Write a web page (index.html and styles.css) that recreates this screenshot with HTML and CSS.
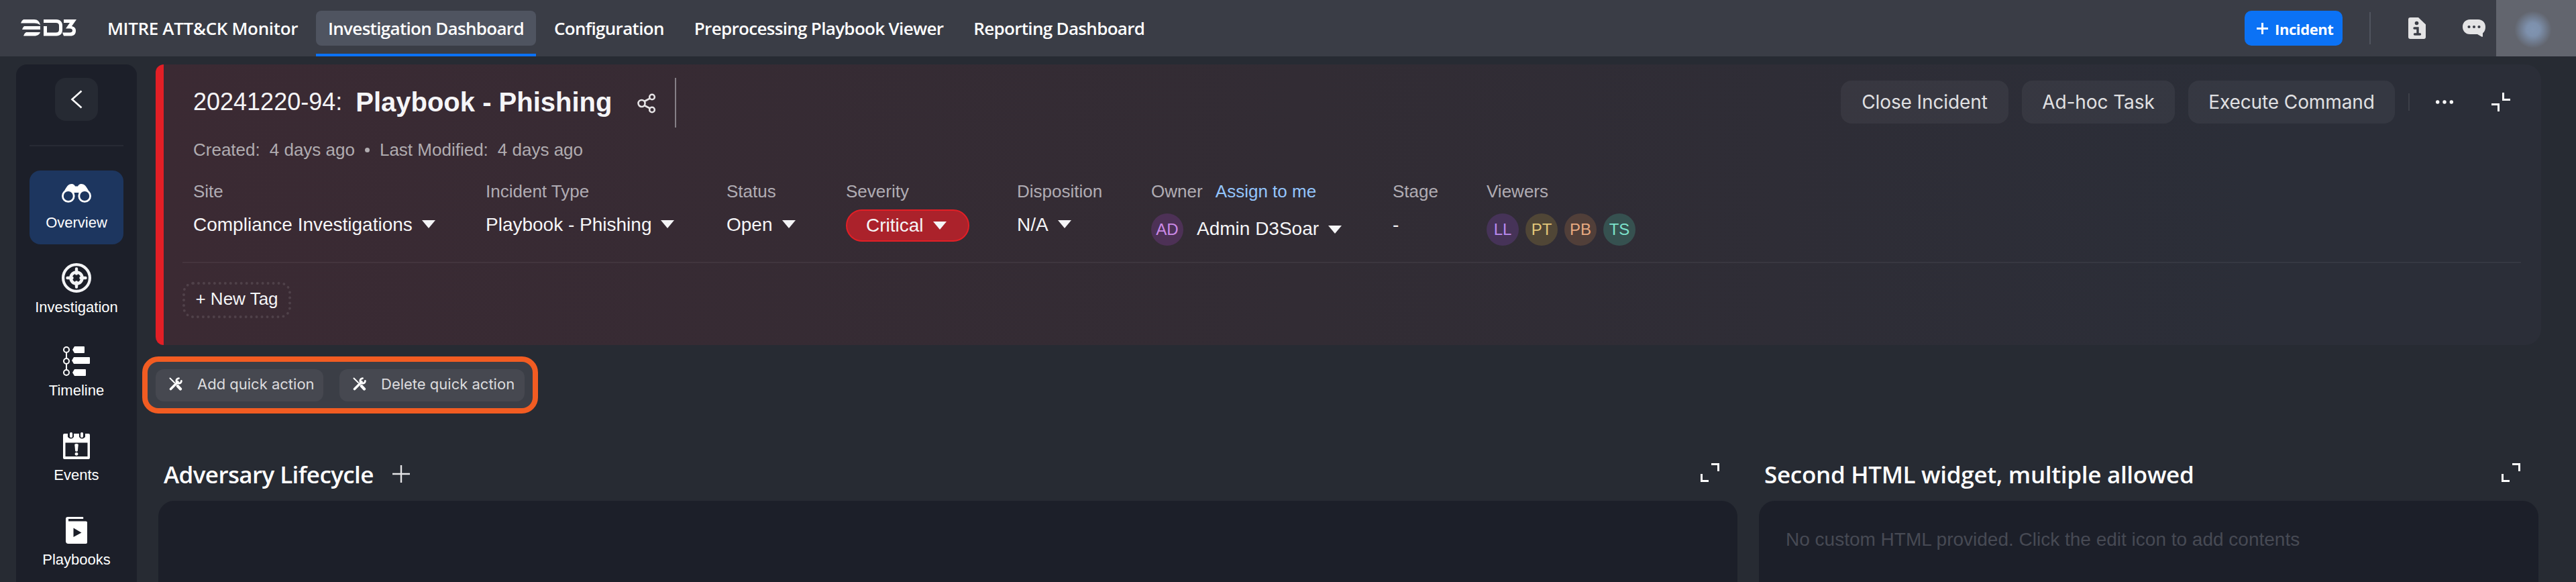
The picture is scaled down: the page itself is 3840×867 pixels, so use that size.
FILE: index.html
```html
<!DOCTYPE html>
<html lang="en">
<head>
    <meta charset="UTF-8">
    <meta name="viewport" content="width=device-width, initial-scale=1.0">
    <title>Investigation Dashboard</title>
    <link rel="stylesheet" href="styles.css">
</head>
<body>

    <!-- Top bar -->
    <header class="topbar">
        <svg class="logo" width="84" height="26" viewBox="0 0 84 26" fill="#fff">
            <path d="M4 0H20C25 0 28 3 29 8.500C27 6.500 24 5.500 20 5.500H0Q1 1.500 4 0Z"/>
            <path d="M5 10H29V15H2Q3 11.500 5 10Z"/>
            <path d="M8 19H29C28 22 25 24.500 20 24.500H4Q5 20.500 8 19Z"/>
            <path d="M34 0H53C59 0 62 4 62 9V15C62 21 59 24.500 53 24.500H34V10H39V19.500H52C55.500 19.500 57 18 57 15V9C57 6.500 55.500 5 52 5H34Z"/>
            <path d="M64 0H83L76 10C80 11 82 13 82 17C82 22 79 24.500 74 24.500H64L62 19.500H73C75.500 19.500 77 18.500 77 16.500C77 14.500 75.500 13.500 73 13.500H67L73 5H64Z"/>
        </svg>
        <nav class="nav">
            <a class="nav-tab nav-tab-wide">MITRE ATT&amp;CK Monitor</a>
            <a class="nav-tab active">Investigation Dashboard</a>
            <a class="nav-tab">Configuration</a>
            <a class="nav-tab">Preprocessing Playbook Viewer</a>
            <a class="nav-tab">Reporting Dashboard</a>
        </nav>
        <div class="topbar-right">
            <button class="btn-incident">
                <svg width="17" height="17" viewBox="0 0 17 17"><path d="M8.500 0V17M0 8.500H17" stroke="#fff" stroke-width="3"/></svg>
                <span>Incident</span>
            </button>
            <div class="topbar-line"></div>
            <svg class="icon-doc" width="26" height="32" viewBox="0 0 26 32">
                <path d="M3 0H15L26 10.500V29Q26 32 23 32H3Q0 32 0 29V3Q0 0 3 0Z" fill="#e4e4e5"/>
                <circle cx="12.500" cy="8.500" r="2.800" fill="#3a3d46"/>
                <path d="M9 16H14V24.500M9.500 25H17.500" fill="none" stroke="#3a3d46" stroke-width="3.400" stroke-linecap="round"/>
            </svg>
            <svg class="icon-chat" width="34" height="26" viewBox="0 0 34 26">
                <path d="M11 0H23C30 0 34 5 34 11C34 15 33 18 30 20.500V25Q29.500 26.500 28 25.500L22 22H11C4 22 0 17 0 11C0 5 4 0 11 0Z" fill="#e4e4e5"/>
                <circle cx="9.500" cy="11" r="2.100" fill="#3a3d46"/><circle cx="17" cy="11" r="2.100" fill="#3a3d46"/><circle cx="24.500" cy="11" r="2.100" fill="#3a3d46"/>
            </svg>
            <div class="account"><div class="account-photo"></div></div>
        </div>
    </header>

    <div class="page">

        <!-- Sidebar -->
        <aside class="sidebar">
            <button class="btn-back">
                <svg width="18" height="28" viewBox="0 0 18 28"><path d="M16.500 1.500L2.500 14L16.500 26.500" fill="none" stroke="#fff" stroke-width="2.600"/></svg>
            </button>
            <div class="sidebar-line"></div>
            <a class="side-item active">
                <svg class="side-icon" viewBox="0 0 44 44">
                    <path d="M1.500 23C4 18 6 14 8.500 11Q11 8 15 8Q18.500 8 20 11.500H24Q25.500 8 29 8Q33 8 35.500 11C38 14 40 18 42.500 23L36 20L27 22L25 21H19L17 22L8 20Z" fill="#fff"/>
                    <circle cx="9.800" cy="26" r="8.400" fill="#1d365f" stroke="#fff" stroke-width="2.800"/>
                    <circle cx="34.200" cy="26" r="8.400" fill="#1d365f" stroke="#fff" stroke-width="2.800"/>
                </svg>
                <span>Overview</span>
            </a>
            <a class="side-item">
                <svg class="side-icon" viewBox="0 0 44 44" fill="none" stroke="#f3f4f6">
                    <circle cx="22" cy="22" r="19.900" stroke-width="4.200"/>
                    <circle cx="22" cy="22" r="8.500" stroke-width="4.600"/>
                    <path d="M22 8.500V15.500M22 28.500V35.500M8.500 22H15.500M28.500 22H35.500" stroke-width="4.400" stroke-linecap="round"/>
                </svg>
                <span>Investigation</span>
            </a>
            <a class="side-item side-item-up">
                <svg class="side-icon" viewBox="0 0 44 44" fill="#fff">
                    <path d="M7 9V18M7 26V35" stroke="#fff" stroke-width="2"/>
                    <g fill="none" stroke="#fff" stroke-width="2">
                        <circle cx="7" cy="5" r="4"/><circle cx="7" cy="22" r="4"/><circle cx="7" cy="39" r="4"/>
                    </g>
                    <path d="M19 0H33Q34 0 34 1V9Q34 10 33 10H19L16 5Z"/>
                    <path d="M18 16H41Q42 16 42 17V25Q42 26 41 26H18L15 21Z"/>
                    <path d="M19 34H35Q36 34 36 35V43Q36 44 35 44H19L16 39Z"/>
                </svg>
                <span>Timeline</span>
            </a>
            <a class="side-item">
                <svg class="side-icon" viewBox="0 0 44 44">
                    <path d="M2 6Q2 4 4 4H9V9Q14 14 18 9V4H26V9Q30 14 35 9V4H40Q42 4 42 6V40Q42 42 40 42H4Q2 42 2 40Z" fill="#fff"/>
                    <rect x="12" y="2" width="4" height="8" rx="2" fill="#fff"/>
                    <rect x="28" y="2" width="4" height="8" rx="2" fill="#fff"/>
                    <rect x="5.500" y="17.500" width="33" height="20.500" fill="#1c1f29"/>
                    <path d="M19.200 20Q22 18 24.800 20L23.800 30Q22 31.500 20.200 30Z" fill="#fff"/>
                    <circle cx="22" cy="34.300" r="2.400" fill="#fff"/>
                </svg>
                <span>Events</span>
            </a>
            <a class="side-item">
                <svg class="side-icon" viewBox="0 0 44 44">
                    <path d="M9 2H31Q33 2 32 5H10V8.500H36Q38 8.500 38 10V40Q38 42 36 42H10Q6 42 6 38V5Q6 2 9 2Z" fill="#fff"/>
                    <path d="M17.500 18.500L29.500 25.500L17.500 32Z" fill="#1c1f29"/>
                </svg>
                <span>Playbooks</span>
            </a>
        </aside>

        <main class="main">

            <!-- Incident summary -->
            <section class="incident">
                <div class="title-row">
                    <span class="incident-id">20241220-94:</span>
                    <h1 class="incident-name">Playbook - Phishing</h1>
                    <svg class="icon-share" width="28" height="30" viewBox="0 0 28 30" fill="none" stroke="#e6e4e6" stroke-width="2.600">
                        <circle cx="6.500" cy="15" r="5"/><circle cx="22" cy="5.500" r="3.800"/><circle cx="22" cy="24.500" r="3.800"/>
                        <path d="M10.500 12L19 7.500M10.500 18L19 22.500"/>
                    </svg>
                    <div class="title-line"></div>
                    <div class="actions">
                        <button class="btn-action btn-close">Close Incident</button>
                        <button class="btn-action btn-task">Ad-hoc Task</button>
                        <button class="btn-action btn-command">Execute Command</button>
                        <div class="actions-line"></div>
                        <svg class="icon-more" width="26" height="6" viewBox="0 0 26 6" fill="#fff"><circle cx="2.700" cy="3" r="2.700"/><circle cx="13" cy="3" r="2.700"/><circle cx="23.300" cy="3" r="2.700"/></svg>
                        <svg width="28" height="28" viewBox="0 0 28 28"><path d="M17.500 0V10.500H28M0 17.500H10.500V28" fill="none" stroke="#fff" stroke-width="3"/></svg>
                    </div>
                </div>

                <div class="dates">
                    <span>Created:</span><span>4 days ago</span><i class="dot"></i><span>Last Modified:</span><span>4 days ago</span>
                </div>

                <div class="fields">
                    <div class="field">
                        <label>Site</label>
                        <div class="value">Compliance Investigations<i class="caret"></i></div>
                    </div>
                    <div class="field">
                        <label>Incident Type</label>
                        <div class="value">Playbook - Phishing<i class="caret"></i></div>
                    </div>
                    <div class="field">
                        <label>Status</label>
                        <div class="value">Open<i class="caret"></i></div>
                    </div>
                    <div class="field">
                        <label>Severity</label>
                        <div class="pill">Critical<i class="caret"></i></div>
                    </div>
                    <div class="field">
                        <label>Disposition</label>
                        <div class="value">N/A<i class="caret"></i></div>
                    </div>
                    <div class="field">
                        <label>Owner <a class="assign">Assign to me</a></label>
                        <div class="people">
                            <span class="avatar avatar-ad">AD</span>
                            <span class="owner-name">Admin D3Soar<i class="caret"></i></span>
                        </div>
                    </div>
                    <div class="field">
                        <label>Stage</label>
                        <div class="value">-</div>
                    </div>
                    <div class="field">
                        <label>Viewers</label>
                        <div class="people">
                            <span class="avatar avatar-ll">LL</span>
                            <span class="avatar avatar-pt">PT</span>
                            <span class="avatar avatar-pb">PB</span>
                            <span class="avatar avatar-ts">TS</span>
                        </div>
                    </div>
                </div>

                <div class="tags">
                    <button class="btn-tag">+ New Tag</button>
                </div>
            </section>

            <!-- Quick actions -->
            <div class="quick">
                <button class="btn-quick btn-quick-add">
                    <svg width="20" height="20" viewBox="0 0 20 20" fill="none" stroke="#fff" stroke-linecap="round">
                        <path d="M1.500 1.500L8 8" stroke-width="2"/><path d="M12.800 13L17 17.500" stroke-width="4.200"/><path d="M2.500 17.500L13 7" stroke-width="3.600"/>
                        <path d="M14.500 1.600A3.800 3.800 0 1 0 18.400 5.500" stroke-width="2.800"/>
                    </svg>
                    Add quick action
                </button>
                <button class="btn-quick">
                    <svg width="20" height="20" viewBox="0 0 20 20" fill="none" stroke="#fff" stroke-linecap="round">
                        <path d="M1.500 1.500L8 8" stroke-width="2"/><path d="M12.800 13L17 17.500" stroke-width="4.200"/><path d="M2.500 17.500L13 7" stroke-width="3.600"/>
                        <path d="M14.500 1.600A3.800 3.800 0 1 0 18.400 5.500" stroke-width="2.800"/>
                    </svg>
                    Delete quick action
                </button>
            </div>

            <!-- Widgets -->
            <div class="widgets">
                <section class="widget">
                    <div class="widget-head">
                        <h2 class="widget-title-tight">Adversary Lifecycle</h2>
                        <svg class="icon-plus" width="26" height="26" viewBox="0 0 26 26"><path d="M13 0V26M0 13H26" stroke="#e4e4e6" stroke-width="2.400"/></svg>
                        <svg class="icon-expand" width="28" height="28" viewBox="0 0 28 28"><path d="M16 1.500H26.500V12M1.500 16V26.500H12" fill="none" stroke="#fff" stroke-width="3"/></svg>
                    </div>
                    <div class="widget-body"></div>
                </section>
                <section class="widget">
                    <div class="widget-head">
                        <h2>Second HTML widget, multiple allowed</h2>
                        <svg class="icon-expand" width="28" height="28" viewBox="0 0 28 28"><path d="M16 1.500H26.500V12M1.500 16V26.500H12" fill="none" stroke="#fff" stroke-width="3"/></svg>
                    </div>
                    <div class="widget-body">No custom HTML provided. Click the edit icon to add contents</div>
                </section>
            </div>

        </main>
    </div>

</body>
</html>
```
FILE: styles.css
```css
* { box-sizing: border-box; }
body { margin: 0; height: 867px; overflow: hidden; background: #272b33; color: #f5f5f7; font-family: "Liberation Sans", Arial, sans-serif; }
button { border: none; margin: 0; padding: 0; color: inherit; font-family: inherit; cursor: pointer; }
svg { display: block; flex: none; }
h1, h2 { margin: 0; }

/* Top bar */
.topbar { display: flex; align-items: center; height: 84px; padding-left: 31px; background: #3a3d46; }
.nav { display: flex; gap: 9px; height: 84px; margin-left: 27px; }
.nav-tab { height: 52px; margin-top: 16px; padding: 0 18px; border-radius: 8px; font: 600 26px/52px "Open Sans", sans-serif; letter-spacing: -0.68px; color: #fff; white-space: nowrap; }
.nav-tab-wide { letter-spacing: -0.35px; }
.nav-tab.active { background: #4f5460; position: relative; }
.nav-tab.active::after { content: ""; position: absolute; left: 0; right: 0; top: 64px; height: 4px; background: #0b72f5; }
.topbar-right { display: flex; align-items: center; height: 84px; margin-left: auto; }
.btn-incident { display: flex; align-items: center; width: 146px; height: 52px; padding-left: 18px; border-radius: 10px; background: #0b72f5; color: #fff; font: 700 22px/50px "Open Sans", sans-serif; letter-spacing: -0.4px; }
.btn-incident span { margin-left: 10px; padding-top: 1px; }
.topbar-line { width: 2px; height: 48px; margin-left: 40px; background: #50545e; }
.icon-doc { margin-left: 56px; }
.icon-chat { margin-left: 55px; }
.account { width: 119px; height: 84px; margin-left: 16px; padding: 16px 0 0 27px; background: #62656e; }
.account-photo { width: 56px; height: 56px; border-radius: 50%; background: radial-gradient(circle, #8094b1 0, #7d90ac 25%, rgba(128, 148, 177, 0) 70%); }

/* Sidebar */
.page { display: flex; height: 783px; padding-top: 12px; }
.sidebar { display: flex; flex-direction: column; align-items: center; flex: none; width: 180px; height: 800px; margin-left: 24px; padding-top: 20px; border-radius: 16px 16px 0 0; background: #1c1f29; }
.btn-back { display: flex; align-items: center; justify-content: center; flex: none; width: 64px; height: 64px; border-radius: 16px; background: #262a33; }
.sidebar-line { flex: none; width: 140px; height: 2px; margin: 36px 0; background: #272a34; }
.side-item { display: flex; flex-direction: column; align-items: center; flex: none; width: 140px; height: 110px; margin-bottom: 16px; padding-top: 12px; border-radius: 16px; color: #fff; font-size: 22px; line-height: 26px; }
.side-item.active { background: #1d365f; }
.side-item-up { margin-top: -2px; }
.side-icon { width: 44px; height: 44px; margin-bottom: 9px; }

/* Incident summary */
.main { flex: none; width: 3584px; padding-left: 28px; }
.incident { height: 418px; padding: 20px 30px 0 28px; border-left: 12px solid #e21f26; border-radius: 12px 24px 24px 12px; background: linear-gradient(90deg, #3b2a33, #322c34 48%, #2b2e38 88%); }
.title-row { display: flex; align-items: center; height: 72px; padding: 0 16px 0 16px; }
.incident-id { font-size: 36px; }
.incident-name { margin-left: 20px; font-size: 40px; font-weight: 700; }
.icon-share { margin: 4px 0 0 38px; }
.title-line { align-self: flex-start; flex: none; width: 2px; height: 74px; margin-left: 28px; background: #858087; }
.actions { display: flex; align-items: center; margin-left: auto; }
.btn-action { height: 64px; margin-right: 20px; border-radius: 16px; background: rgba(255, 255, 255, 0.05); color: #e0e0e2; font: 28px/60px Inter, sans-serif; letter-spacing: -0.1px; white-space: nowrap; }
.btn-close { width: 250px; }
.btn-task { width: 228px; }
.btn-command { width: 308px; }
.actions-line { width: 2px; height: 26px; background: #3c3f48; }
.icon-more { margin: 0 57px 0 39px; }
.dates { display: flex; align-items: center; gap: 14px; padding-left: 16px; margin-top: 20px; font-size: 26px; line-height: 30px; color: #b0acb0; }
.dot { width: 7px; height: 7px; margin: 0 1px; border-radius: 50%; background: #b0acb0; }

.fields { display: grid; grid-template-columns: 436px 359px 178px 255px 200px 360px 140px auto; height: 120px; padding: 0 0 0 16px; margin-top: 32px; }
.field label { display: block; font-size: 26px; line-height: 30px; color: #b0acb3; }
.value { display: flex; margin-top: 17px; font-size: 28px; line-height: 36px; white-space: nowrap; }
.caret { display: inline-block; margin: 11px 0 0 14px; border: 10px solid transparent; border-top: 12px solid #f5f5f7; border-bottom: none; align-self: flex-start; }
.pill { display: flex; width: 184px; height: 48px; margin-top: 12px; padding-left: 28px; border: 2px solid #e21f26; border-radius: 24px; background: #ab222b; font-size: 28px; line-height: 44px; }
.pill .caret { margin-top: 16px; }
.assign { margin-left: 12px; color: #93c5fd; }
.people { display: flex; gap: 10px; margin-top: 18px; }
.avatar { width: 48px; height: 48px; border-radius: 50%; font-size: 24px; line-height: 48px; text-align: center; }
.avatar-ad { background: #4d3156; color: #cc8ae8; }
.avatar-ll { background: #463358; color: #b98af0; }
.avatar-pt { background: #504636; color: #e3c77a; }
.avatar-pb { background: #513f39; color: #e8a980; }
.avatar-ts { background: #365150; color: #7de3cc; }
.owner-name { display: flex; margin-left: 10px; font-size: 28px; line-height: 46px; }
.owner-name .caret { margin-top: 18px; }

.tags { padding-top: 28px; border-top: 2px solid rgba(255, 255, 255, 0.05); }
.btn-tag { width: 162px; height: 54px; padding-bottom: 5px; border: 4px dotted rgba(255, 255, 255, 0.11); border-radius: 16px; background: none; font-size: 26px; line-height: 40px; }

/* Quick actions */
.quick { display: flex; gap: 24px; width: 590px; height: 85px; margin: 17px 0 0 -20px; padding: 11px 12px; border: 8px solid #f25c22; border-radius: 24px; background: #3b3e46; }
.btn-quick { display: flex; align-items: center; gap: 22px; width: 276px; height: 48px; padding: 0 0 4px 20px; border-radius: 12px; background: #464850; color: #dcdcde; font: 22px/44px Inter, sans-serif; white-space: nowrap; }
.btn-quick-add { width: 250px; }

/* Widgets */
.widgets { display: grid; grid-template-columns: 2354px 1162px; gap: 32px; margin: 68px 0 0 4px; }
.widget-head { display: flex; align-items: center; height: 44px; padding: 0 27px 0 8px; }
.widget-head h2 { padding-top: 1px; font: 600 35px/44px "Open Sans", sans-serif; letter-spacing: -0.3px; color: #fff; }
.widget-head .widget-title-tight { letter-spacing: -0.6px; }
.icon-plus { margin-left: 28px; }
.icon-expand { margin: 0 0 4px auto; }
.widget-body { height: 160px; margin-top: 18px; padding: 42px 40px; border-radius: 24px; background: #1c1f29; color: #474a54; font-size: 28px; line-height: 32px; }
```
